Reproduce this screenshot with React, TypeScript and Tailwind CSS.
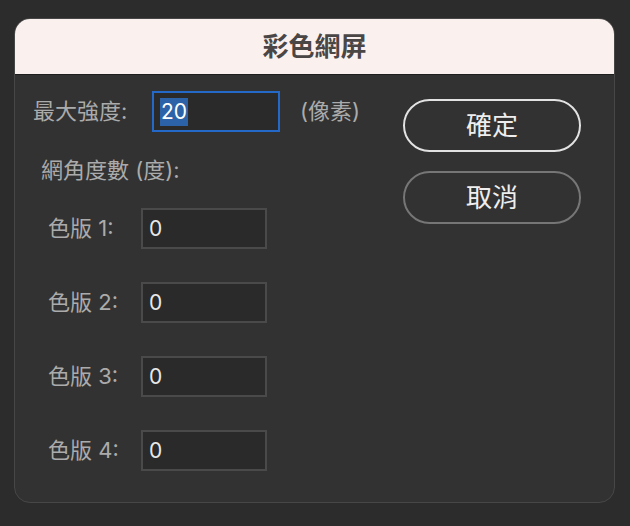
import React from 'react';

const font = "font-['Inter','Noto_Sans_CJK_TC',sans-serif]";

const plates = ['1', '2', '3', '4'];

const NumberBox: React.FC<{ value: string }> = ({ value }) => (
  <div className="w-[126px] h-[41px] border-2 border-[#4a4a4a] bg-[#2a2a2a] flex items-center pl-[6px] text-[21px] text-[#e8e8e8]">
    {value}
  </div>
);

const App: React.FC = () => {
  return (
    <div className={`w-[630px] h-[526px] bg-[#2c2c2c] pt-[18px] pl-[14px] ${font}`}>
      <div className="w-[601px] h-[485px] rounded-[16px] overflow-hidden border border-[#474747] bg-[#323232] flex flex-col">
        {/* Title bar */}
        <div className="h-[56px] shrink-0 bg-[#faf1ef] border-b border-[#1e1e1e] flex items-center justify-center">
          <span className="text-[26px] font-semibold text-[#4a4646]">彩色網屏</span>
        </div>

        <div className="flex justify-between pl-[18px] pr-[33px] pt-[16px]">
          {/* Form column */}
          <div className="flex flex-col">
            <div className="flex items-center">
              <span className="w-[119px] text-[22px] text-[#ababab]">最大強度:</span>
              <div className="w-[128px] h-[41px] border-2 border-[#2468c8] bg-[#2a2a2a] flex items-center pl-[6px]">
                <span className="bg-[#2c63a8] text-white text-[21px] leading-[28px] px-[1px]">20</span>
              </div>
              <span className="ml-[20px] text-[22px] text-[#ababab]">(像素)</span>
            </div>

            <div className="mt-[24px] pl-[8px] text-[22px] leading-[28px] text-[#ababab]">網角度數 (度):</div>

            <div className="mt-[24px] flex flex-col gap-[33px] pl-[15px]">
              {plates.map((n) => (
                <div key={n} className="flex items-center">
                  <span className="w-[93px] text-[22px] text-[#ababab]">色版 {n}:</span>
                  <NumberBox value="0" />
                </div>
              ))}
            </div>
          </div>

          {/* Buttons */}
          <div className="flex flex-col gap-[19px] pt-[8px]">
            <button className="w-[178px] h-[53px] rounded-full border-2 border-[#e2e2e2] text-[26px] text-[#eeeeee]">
              確定
            </button>
            <button className="w-[178px] h-[53px] rounded-full border-2 border-[#767676] text-[26px] text-[#eeeeee]">
              取消
            </button>
          </div>
        </div>
      </div>
    </div>
  );
};

export default App;
